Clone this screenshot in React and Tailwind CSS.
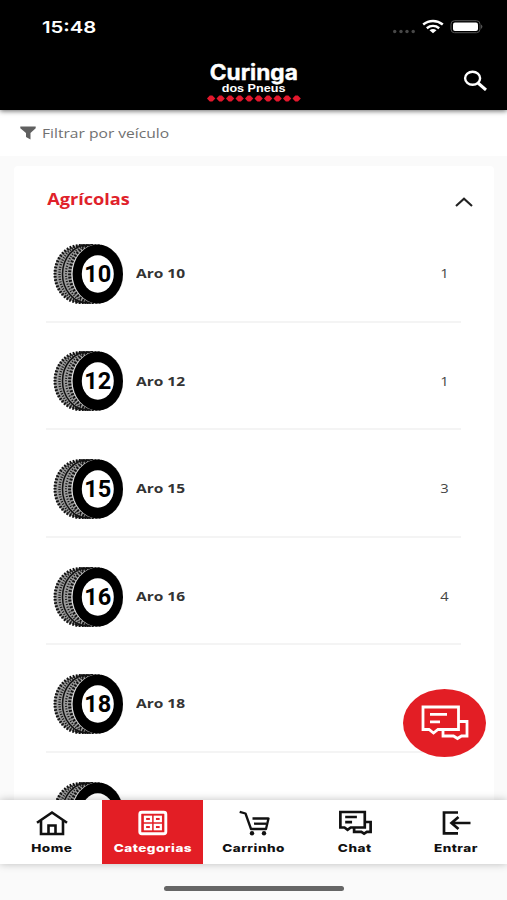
import React, { useState } from "react";

const categories = [
  { id: 1, size: "10", total: 1 },
  { id: 2, size: "12", total: 1 },
  { id: 3, size: "15", total: 3 },
  { id: 4, size: "16", total: 4 },
  { id: 5, size: "18", total: "" },
  { id: 6, size: "", total: "" },
];

const HomeIcon = () => (
  <svg className="ml-px" width="32" height="26" viewBox="0 0 32 26" fill="none" stroke="currentColor" strokeWidth="2.600">
    <path d="M1 12.800 L16 2.500 L31 12.800" />
    <path d="M5 10.500 V24 H27 V10.500" />
    <path d="M12.500 24 V15.500 H19.500 V24" />
  </svg>
);

const GridIcon = () => (
  <svg width="30" height="26" viewBox="0 0 30 26" fill="none" stroke="currentColor" strokeWidth="2.300">
    <rect x="1.800" y="2.300" width="26" height="21.400" rx="2" strokeWidth="2.900" />
    <rect x="7" y="6.800" width="6" height="4.300" />
    <rect x="16.800" y="6.800" width="6" height="4.300" />
    <rect x="7" y="14.900" width="6" height="4.300" />
    <rect x="16.800" y="14.900" width="6" height="4.300" />
  </svg>
);

const CartIcon = () => (
  <svg width="32" height="26" viewBox="0 0 32 26" fill="none" stroke="currentColor" strokeWidth="2.300">
    <path d="M1.700 1.800 L7.500 3.500 L13 19 H28 L30.500 8.500 H14.500" strokeLinejoin="round" />
    <path d="M16 13.700 H28.500" />
    <circle cx="14" cy="23.200" r="2.200" fill="currentColor" stroke="none" />
    <circle cx="26" cy="23.200" r="2.200" fill="currentColor" stroke="none" />
  </svg>
);

const ChatIcon = ({ className, strokeWidth = 2.8 }) => (
  <svg className={className} viewBox="0 0 48 36" fill="none" stroke="currentColor" strokeWidth={strokeWidth}>
    <path d="M2 2 H37.500 V24.500 H17 L12.500 28 L8 24.500 H2 Z" />
    <path d="M37.500 16.500 H46 V31 H40.500 L36.500 33.500 L32.500 31 H22 V24.500" />
    <path d="M9 9.300 H26 M9 16.800 H19" />
  </svg>
);

const LoginIcon = () => (
  <svg width="30" height="26" viewBox="0 0 30 26" fill="none" stroke="currentColor" strokeWidth="2.700">
    <path d="M17 2.500 H3 V23.300 H17" />
    <path d="M29.500 13 H11 M17.500 7 L10.500 13 L17.500 19" />
  </svg>
);

const Tire = ({ size }) => (
  <svg className="shrink-0" width="70" height="60" viewBox="0 0 70 60">
    <path d="M45 .5 H30 C12 1.500 1 13 1 30 S12 58.500 30 59.500 H45 Z" fill="#9a9a9a" />
    <g fill="none" stroke="#111">
      <ellipse cx="27" cy="30" rx="25" ry="28.500" strokeWidth="3" strokeDasharray="1.700 1.500" />
      <ellipse cx="31" cy="30" rx="24.500" ry="28.800" strokeWidth="2.400" strokeDasharray="1 1.500" />
      <ellipse cx="34.500" cy="30" rx="25" ry="29" strokeWidth="1.500" />
      <ellipse cx="37.500" cy="30" rx="24.500" ry="28.800" strokeWidth="2" strokeDasharray="1 1.600" />
      <ellipse cx="41.800" cy="30" rx="25" ry="28.500" strokeWidth="3.400" strokeDasharray="1.800 1.500" />
    </g>
    <ellipse cx="44.500" cy="30" rx="26.200" ry="29.500" fill="#ddd" />
    <ellipse cx="44.800" cy="30" rx="25.200" ry="29.500" />
    <ellipse cx="44.800" cy="30" rx="16" ry="18.700" fill="#fff" />
    {size && (
      <text
        x="44.800"
        y="37.800"
        textAnchor="middle"
        textLength="27"
        lengthAdjust="spacingAndGlyphs"
        className="font-['Roboto'] text-[24px] font-bold"
      >
        {size}
      </text>
    )}
  </svg>
);

const StatusBar = () => (
  <div className="flex h-[54px] items-center justify-between pl-[42px] pr-[24px]">
    <span className="origin-left scale-x-[1.23] font-['Inter'] text-[16.500px] font-semibold">15:48</span>
    <svg width="90" height="16" viewBox="0 0 90 16">
      <g fill="#484848">
        <circle cx="1.700" cy="12.500" r="1.700" />
        <circle cx="8" cy="12.500" r="1.700" />
        <circle cx="14" cy="12.500" r="1.700" />
        <circle cx="20.200" cy="12.500" r="1.700" />
      </g>
      <g fill="none" stroke="#fff" strokeWidth="2.500">
        <path d="M30.200 5.500 C36 .8 44 .8 49.800 5.500" />
        <path d="M33.800 9.200 C37.500 6.300 42.500 6.300 46.200 9.200" />
      </g>
      <path d="M36.500 11.300 Q40 8.900 43.500 11.300 L40 14.300 Z" fill="#fff" />
      <rect x="58" y="1.700" width="29" height="12" rx="3.500" fill="none" stroke="#555" />
      <rect x="60" y="3.500" width="25" height="8.500" rx="2" fill="#fff" />
      <path d="M88.200 5.500 Q90.500 7.700 88.200 9.900 Z" fill="#666" />
    </svg>
  </div>
);

const Header = () => (
  <header className="relative z-10 h-[110px] shrink-0 bg-black text-white shadow-[0_1px_5px_rgba(0,0,0,0.6)]">
    <StatusBar />
    <div className="grid grid-cols-[1fr_100px_1fr] pt-2">
      <div />
      <div className="flex flex-col items-center">
        <span className="mt-px scale-x-[1.08] font-['Inter'] text-[21px] font-bold leading-[20px] [-webkit-text-stroke:0.4px_white]">Curinga</span>
        <span className="scale-x-[1.2] font-['Liberation_Sans'] text-[10.500px] font-bold leading-[11px]">dos Pneus</span>
        <svg width="94" height="7" viewBox="0 0 94 7" className="mt-px" fill="#e3182d">
          {[...Array(10)].map((_, i) => (
            <path key={i} transform={`translate(${i * 9.5} 0)`} d="M0 3.500 L2.800 .5 H5.400 L8.300 3.500 L5.400 6.500 H2.800 Z" />
          ))}
        </svg>
      </div>
      <button className="mr-[20px] mt-[8px] self-start justify-self-end">
        <svg width="24" height="21" viewBox="0 0 24 21" fill="none" stroke="#fff">
          <ellipse cx="9.600" cy="8.200" rx="7.500" ry="6.500" strokeWidth="2.400" />
          <path d="M15 13 L23 20" strokeWidth="3" />
        </svg>
      </button>
    </div>
  </header>
);

const tabs = [
  { name: "Home", icon: <HomeIcon /> },
  { name: "Categorias", icon: <GridIcon /> },
  { name: "Carrinho", icon: <CartIcon /> },
  { name: "Chat", icon: <ChatIcon className="h-[26px] w-[33px]" strokeWidth={3.9} /> },
  { name: "Entrar", icon: <LoginIcon /> },
];

const App = () => {
  const [open, setOpen] = useState(true);
  const [active, setActive] = useState("Categorias");

  return (
    <div className="relative flex h-[900px] w-[507px] flex-col overflow-hidden bg-[#fafafa] font-['Open_Sans',sans-serif]">
      <Header />

      {/* Filter */}
      <div className="flex h-[46px] shrink-0 items-center gap-[6px] bg-white pl-[20px] text-[#707070]">
        <svg width="16" height="14" viewBox="0 0 16 14" fill="#606060">
          <path d="M.3 .5 H15.700 V2.200 L10.500 7 V13.500 L6 11 V7 L.3 2.200 Z" />
        </svg>
        <span className="mt-[2px] origin-left scale-x-[1.2] text-[13px]">Filtrar por veículo</span>
      </div>

      {/* Category list */}
      <main className="min-h-0 flex-1 overflow-hidden px-[14px] pt-[10px]">
        <section className="mr-[-1px] h-[800px] rounded bg-white pl-[32px] pr-[33px]">
          <button
            className="flex h-[49px] w-full items-end justify-between pb-[5px] text-left"
            onClick={() => setOpen(!open)}
          >
            <h2 className="origin-left scale-x-[1.17] pl-px text-[15.500px] font-bold leading-[22px] text-[#e0212a]">Agrícolas</h2>
            <svg className="mb-[3px] mr-[-12px]" width="18" height="10" viewBox="0 0 18 10" fill="none" stroke="#222" strokeWidth="2.100">
              <path d="M1 9 L9 1.700 L17 9" />
            </svg>
          </button>
          {open &&
            categories.map((cat) => (
              <div
                key={cat.id}
                className="flex h-[107.600px] items-center border-b-2 border-[#f4f4f4] pl-[7px] pr-[13px] pt-[12px]"
              >
                <Tire size={cat.size} />
                {cat.size && (
                  <span className="ml-[13px] mt-px origin-left scale-x-[1.24] text-[12.500px] font-bold text-[#333]">Aro {cat.size}</span>
                )}
                <span className="ml-auto mt-px scale-x-[1.18] text-[12.500px] text-[#444]">{cat.total}</span>
              </div>
            ))}
        </section>
      </main>

      <button className="absolute left-[403px] top-[689px] flex h-[68px] w-[83px] items-center justify-center rounded-[50%] bg-[#e31e25] text-white">
        <ChatIcon className="h-[36px] w-[48px]" />
      </button>

      {/* Bottom menu */}
      <nav className="z-10 grid h-[64px] shrink-0 grid-cols-5 bg-white pl-px shadow-[0_0_8px_rgba(0,0,0,0.25)]">
        {tabs.map((tab) => (
          <button
            key={tab.name}
            onClick={() => setActive(tab.name)}
            className={`flex flex-col items-center pt-[10px] ${active === tab.name ? "bg-[#e31e25] text-white" : "text-[#111]"}`}
          >
            {tab.icon}
            <span className="mt-[4px] scale-x-[1.23] font-['Inter'] text-[11px] font-extrabold leading-[16px] tracking-[0.4px]">{tab.name}</span>
          </button>
        ))}
      </nav>
      <div className="flex h-[36px] shrink-0 justify-center pt-[22px]">
        <div className="h-[5px] w-[180px] rounded-full bg-[#666]" />
      </div>
    </div>
  );
};

export default App;
